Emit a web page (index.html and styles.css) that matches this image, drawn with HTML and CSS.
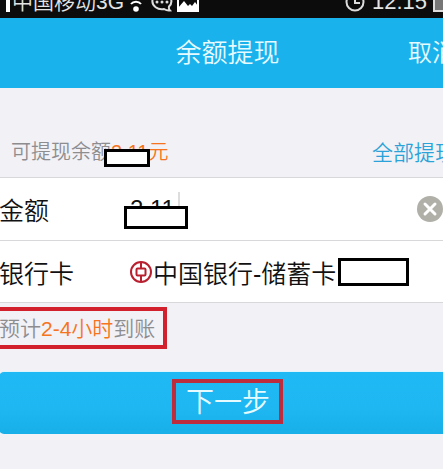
FILE: index.html
```html
<!DOCTYPE html>
<html lang="zh-CN">
<head>
    <meta charset="UTF-8">
    <meta name="viewport" content="width=device-width, initial-scale=1.0">
    <title>余额提现</title>
    <link rel="stylesheet" href="styles.css">
</head>
<body>
    <div class="screen">
        <div class="status-bar">
            <span class="signal"></span>
            <span class="carrier">中国移动3G</span>
            <svg class="wifi" width="16" height="20" viewBox="0 0 16 20">
                <path d="M0 6a11 11 0 0 1 16 0M3 12a6 5 0 0 1 10 0" fill="none" stroke="#fff" stroke-width="2"/>
                <circle cx="8" cy="17" r="2.800" fill="#fff"/>
            </svg>
            <svg class="chat" width="22" height="20" viewBox="0 0 22 20">
                <path d="M18 14.500a9.500 8 0 1 0-5 2.500q3 2 6 1.500-1.500-1.500-1-4z" fill="none" stroke="#ddd" stroke-width="2"/>
                <circle cx="6" cy="10" r="1.500" fill="#ddd"/>
                <circle cx="11" cy="10" r="1.500" fill="#ddd"/>
                <circle cx="16" cy="10" r="1.500" fill="#ddd"/>
            </svg>
            <svg class="picture" width="22" height="20" viewBox="0 0 22 20">
                <path d="M1 1h20v18H1z" fill="none" stroke="#fff" stroke-width="2"/>
                <path d="M1 19v-3l6-7 4 5 2-2 2 2 3-4 3 4v5z" fill="#fff"/>
            </svg>
            <svg class="clock" width="20" height="20" viewBox="0 0 20 20">
                <circle cx="10" cy="10" r="8.500" fill="none" stroke="#ddd" stroke-width="2"/>
                <path d="M10 4v7h5" fill="none" stroke="#ddd" stroke-width="2"/>
            </svg>
            <span class="time">12:15</span>
            <span class="battery"></span>
        </div>

        <header class="header">
            <h1>余额提现</h1>
            <a href="#" class="cancel">取消</a>
        </header>

        <form>
            <div class="balance">
                <span>可提现余额<span class="orange">2.11元</span><span class="mask mask-balance"></span></span>
                <a href="#">全部提现</a>
            </div>

            <div class="card">
                <div class="row">
                    <label for="amount">金额</label>
                    <div class="value amount-value">
                        <input type="text" id="amount" name="amount" value="2.11">
                        <span class="caret"></span>
                        <span class="mask mask-amount"></span>
                    </div>
                    <button type="button" class="clear" aria-label="清除">
                        <svg width="26" height="26" viewBox="0 0 26 26">
                            <circle cx="13" cy="13" r="13" fill="#b0b0a8"/>
                            <path d="M8 8l10 10M18 8L8 18" stroke="#fff" stroke-width="3" stroke-linecap="round"/>
                        </svg>
                    </button>
                </div>
                <div class="row">
                    <span class="label">银行卡</span>
                    <div class="value">
                        <svg class="bank-logo" width="22" height="22" viewBox="0 0 22 22" fill="none" stroke="#b8202f" stroke-width="2">
                            <circle cx="11" cy="11" r="10"/>
                            <rect x="6.500" y="7.500" width="9" height="7" rx="1"/>
                            <path d="M11 1v6M11 15v6"/>
                        </svg>
                        <span>中国银行-储蓄卡</span>
                        <span class="card-number"></span>
                    </div>
                </div>
            </div>

            <p class="note">预计<span class="orange">2-4小时</span>到账</p>

            <button type="submit" class="next"><span>下一步</span></button>
        </form>
    </div>
</body>
</html>
```

FILE: styles.css
```css
* {
    box-sizing: border-box;
}

body {
    margin: 0;
    font-family: "Liberation Sans", "Noto Sans CJK SC", sans-serif;
    font-weight: 350;
    background-color: #f1f1f6;
    overflow-x: hidden;
}

/* the phone screen is a little wider than the window */
.screen {
    margin: 0 -13px 0 -1px;
}

a {
    text-decoration: none;
}

.status-bar {
    display: flex;
    align-items: flex-end;
    height: 18px;
    padding: 0 11px 6px 7px;
    overflow: hidden;
    background-color: #0c0c0c;
    color: #e4e4e4;
    line-height: 20px;
}

.status-bar svg {
    flex: none;
}

.signal {
    width: 4px;
    height: 20px;
    background-color: #fff;
}

.carrier {
    margin-left: 2px;
    font-size: 21px;
    white-space: nowrap;
}

.wifi {
    margin-left: 4px;
}

.chat {
    margin-left: 7px;
}

.picture {
    margin-left: 4px;
}

.clock {
    margin-left: auto;
}

.time {
    margin: 0 6px 0 7px;
    font-size: 22px;
}

.battery {
    width: 12px;
    height: 20px;
    border: 2px solid #ddd;
    background-color: #777;
}

.header {
    display: grid;
    grid-template-columns: 1fr auto 1fr;
    align-items: center;
    height: 70px;
    padding-bottom: 6px;
    background-color: #19b2ec;
}

.header h1 {
    grid-column: 2;
    margin: 0;
    font-size: 26px;
    font-weight: 350;
    color: #e6fbff;
}

.cancel {
    justify-self: end;
    font-size: 24px;
    color: #e6fbff;
}

.balance {
    display: flex;
    justify-content: space-between;
    align-items: center;
    height: 89px;
    padding: 36px 0 0 12px;
    font-size: 20px;
    color: #8d8d90;
}

.balance > span {
    position: relative;
}

.balance a {
    font-size: 21px;
    color: #2ba3d9;
}

.orange {
    color: #f67420;
}

.mask {
    position: absolute;
    border: 3px solid #000;
    background-color: #fff;
}

.mask-balance {
    left: 93px;
    bottom: -2px;
    width: 46px;
    height: 18px;
}

.card {
    background-color: #fff;
    border-top: 1px solid #d8d8da;
    border-bottom: 1px solid #d8d8da;
}

.row {
    display: flex;
    align-items: center;
    height: 62px;
    font-size: 25px;
    color: #111;
}

.row + .row {
    border-top: 1px solid #d8d8da;
}

.row label, .row .label {
    width: 131px;
}

.value {
    display: flex;
    align-items: center;
    flex: 1;
}

.amount-value {
    position: relative;
}

.value input {
    width: 48px;
    padding: 0;
    border: none;
    outline: none;
    background: none;
    font-family: inherit;
    font-size: 24px;
    color: #111;
}

.caret {
    width: 2px;
    height: 34px;
    background-color: #ddd;
}

.mask-amount {
    left: -6px;
    top: 14px;
    width: 64px;
    height: 23px;
}

.clear {
    margin-right: 13px;
    padding: 0;
    border: none;
    background: none;
}

.clear svg {
    display: block;
}

.bank-logo {
    margin-right: 1px;
}

.card-number {
    width: 71px;
    height: 28px;
    margin-left: 2px;
    border: 3px solid #000;
}

.note {
    width: fit-content;
    margin: 4px 0 23px;
    padding: 2px 8px 0 0;
    border: 4px solid #d3202d;
    border-left: none;
    font-size: 21px;
    line-height: 32px;
    color: #8d8d90;
}

.next {
    display: flex;
    justify-content: center;
    align-items: center;
    width: 100%;
    height: 62px;
    padding: 0 0 3px;
    border: none;
    border-radius: 5px;
    background: linear-gradient(#1fb9f5, #1eb7f2 60%, #18afe8);
    box-shadow: 0 0 0 1px #dff4fb;
    font-family: inherit;
    font-weight: 350;
    color: #e6fbff;
}

.next span {
    padding: 2px 9px 0 10px;
    border: 4px solid #bd2c3d;
    font-size: 28px;
    line-height: 35px;
}
```
